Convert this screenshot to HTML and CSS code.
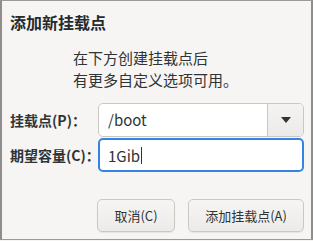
FILE: index.html
```html
<!DOCTYPE html>
<html lang="zh">

<head>
    <meta http-equiv="Content-Type" content="text/html; charset=utf-8">
    <title>添加新挂载点</title>
    <link rel="stylesheet" href="styles.css">
</head>

<body>
    <div class="dialog">
        <div class="title">添加新挂载点</div>
        <div class="info">
            在下方创建挂载点后<br>
            有更多自定义选项可用。
        </div>
        <div class="form">
            <label class="label">挂载点(P)：</label>
            <div class="combo">
                <span class="combo_text">/boot</span>
                <span class="combo_btn"><span class="arrow"></span></span>
            </div>
            <label class="label">期望容量(C)：</label>
            <div class="entry"><span>1Gib</span><span class="cursor"></span></div>
        </div>
        <div class="buttons">
            <div class="btn btn_cancel">取消(C)</div>
            <div class="btn btn_add">添加挂载点(A)</div>
        </div>
    </div>
</body>

</html>
```

FILE: styles.css
```css
    body {
        margin: 0;
        background: #f6f5f4;
    }

    .dialog {
        box-sizing: border-box;
        width: 313px;
        height: 240px;
        background: #f6f5f4;
        border: 1px solid #9b9a99;
        border-left: 2px solid #8e8d8c;
        border-right: 2px solid #8e8d8c;
        padding: 11px 7px 0 8px;
        font-family: "Noto Sans CJK SC", "Noto Sans", sans-serif;
        color: #2e3436;
    }
    /*标题*/
    .title {
        font-size: 16px;
        line-height: 20px;
        font-weight: bold;
        color: #262a2b;
    }

    .info {
        margin: 15px 0 0 63px;
        font-size: 15px;
        line-height: 22px;
    }
    /*表单*/
    .form {
        margin-top: 12px;
        display: grid;
        grid-template-columns: 88px 206px;
        row-gap: 1px;
        align-items: center;
    }

    .label {
        font-size: 14px;
        font-weight: bold;
        white-space: nowrap;
    }

    .combo {
        box-sizing: border-box;
        height: 34px;
        display: flex;
        background: #fff;
        border: 1px solid #cdc7c2;
        border-radius: 5px;
        overflow: hidden;
    }

    .combo_text {
        flex: 1;
        padding-left: 9px;
        font-size: 15px;
        line-height: 32px;
    }

    .combo_btn {
        width: 35px;
        display: flex;
        align-items: center;
        justify-content: center;
        border-left: 1px solid #cdc7c2;
        background: linear-gradient(#f4f3f2, #edebe9);
    }

    .arrow {
        width: 0;
        height: 0;
        border-left: 5px solid transparent;
        border-right: 5px solid transparent;
        border-top: 6px solid #2e3436;
    }

    .entry {
        box-sizing: border-box;
        height: 34px;
        display: flex;
        align-items: center;
        background: #fff;
        border: 2px solid #3584e4;
        border-radius: 5px;
        padding-left: 8px;
        font-size: 15px;
    }

    .cursor {
        width: 1px;
        height: 17px;
        background: #2e3436;
        margin-left: 1px;
    }
    /*按钮*/
    .buttons {
        margin-top: 27px;
        display: flex;
        justify-content: flex-end;
        gap: 13px;
    }

    .btn {
        box-sizing: border-box;
        height: 33px;
        line-height: 31px;
        text-align: center;
        font-size: 13px;
        border: 1px solid #cdc7c2;
        border-radius: 5px;
        background: linear-gradient(#f6f5f4, #edebe9);
        box-shadow: 0 1px 1px rgba(0, 0, 0, 0.07);
    }

    .btn_cancel {
        width: 78px;
    }

    .btn_add {
        width: 116px;
    }
```
